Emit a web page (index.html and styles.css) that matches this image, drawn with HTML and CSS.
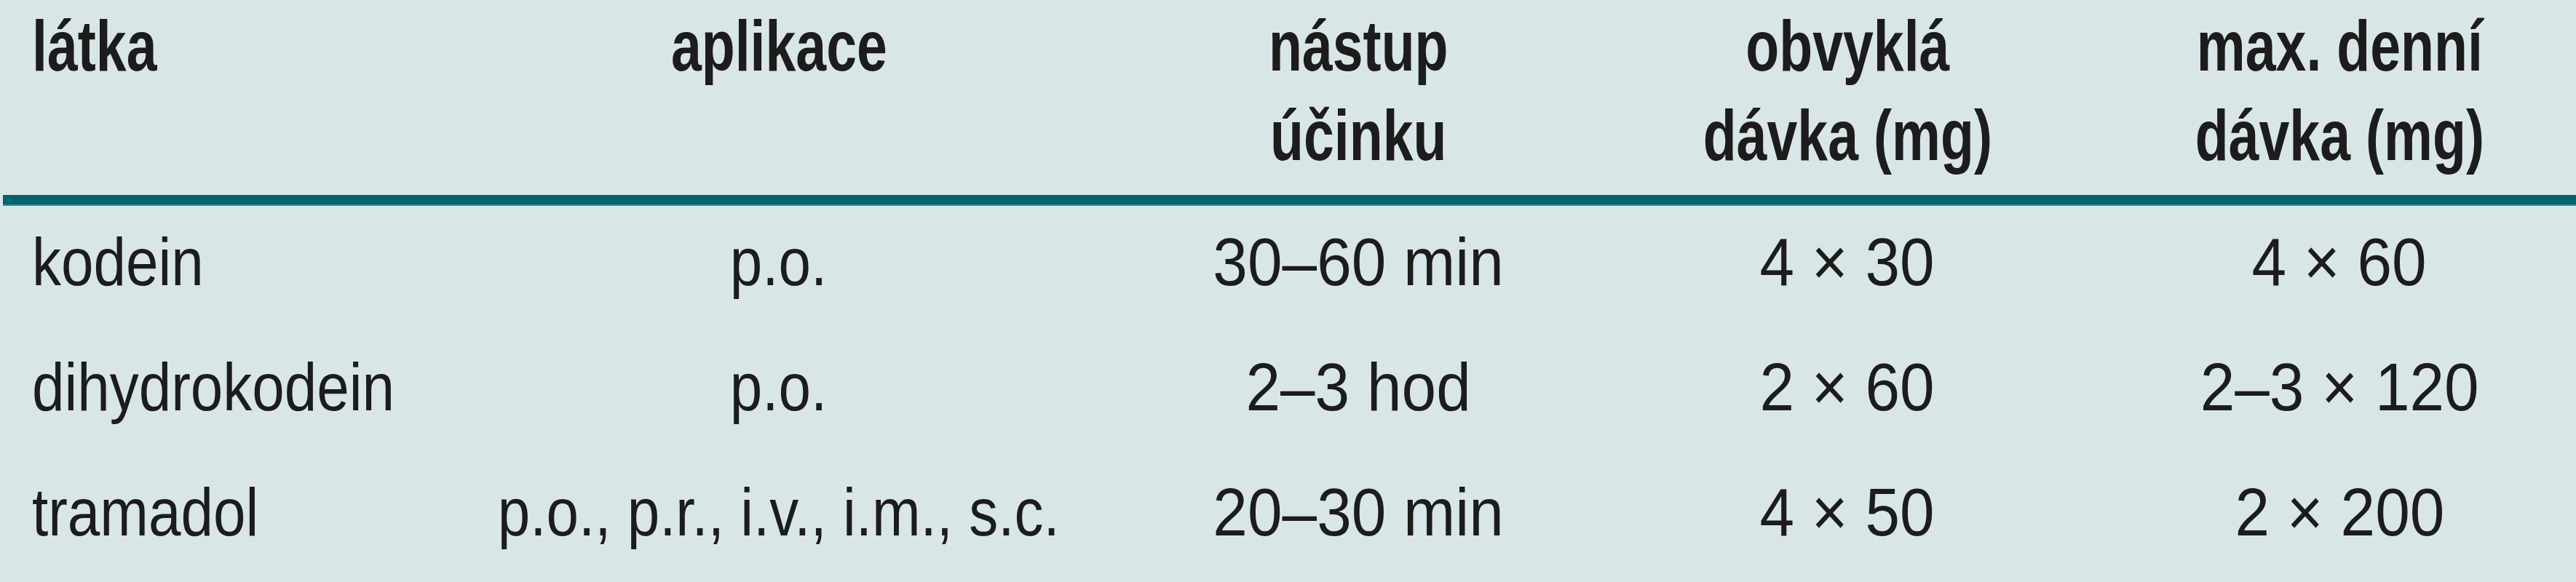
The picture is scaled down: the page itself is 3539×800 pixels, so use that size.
FILE: index.html
```html
<!DOCTYPE html>
<html lang="cs">
<head>
<meta charset="utf-8">
<title>Opioidy</title>
<link rel="stylesheet" href="styles.css">
</head>
<body>
<div class="table">
  <div class="row head">
    <div class="cell first"><span class="t">látka</span></div>
    <div class="cell"><span class="t">aplikace</span></div>
    <div class="cell"><span class="t">nástup<br>účinku</span></div>
    <div class="cell"><span class="t">obvyklá<br>dávka (mg)</span></div>
    <div class="cell"><span class="t">max. denní<br>dávka (mg)</span></div>
  </div>
  <div class="rule"></div>
  <div class="row body">
    <div class="cell first"><span class="t">kodein</span></div>
    <div class="cell"><span class="t">p.o.</span></div>
    <div class="cell"><span class="n">30–60 min</span></div>
    <div class="cell"><span class="n">4 × 30</span></div>
    <div class="cell"><span class="n">4 × 60</span></div>
  </div>
  <div class="row body">
    <div class="cell first"><span class="t">dihydrokodein</span></div>
    <div class="cell"><span class="t">p.o.</span></div>
    <div class="cell"><span class="n">2–3 hod</span></div>
    <div class="cell"><span class="n">2 × 60</span></div>
    <div class="cell"><span class="n">2–3 × 120</span></div>
  </div>
  <div class="row body">
    <div class="cell first"><span class="t">tramadol</span></div>
    <div class="cell"><span class="t">p.o., p.r., i.v., i.m., s.c.</span></div>
    <div class="cell"><span class="n">20–30 min</span></div>
    <div class="cell"><span class="n">4 × 50</span></div>
    <div class="cell"><span class="n">2 × 200</span></div>
  </div>
</div>
</body>
</html>
```
FILE: styles.css
```css
html, body {
  margin: 0;
  padding: 0;
  background: #d9e6e8;
}
body {
  width: 3539px;
  height: 800px;
  overflow: hidden;
  font-family: "Liberation Sans", Arial, sans-serif;
  color: #1c1c1c;
}
.row {
  display: grid;
  grid-template-columns: 595px 950px 642px 702px 650px;
}
.cell {
  text-align: center;
  white-space: nowrap;
}
.cell.first {
  text-align: left;
  padding-left: 44px;
}
.t, .n {
  display: inline-block;
  transform-origin: 50% 50%;
}
.first .t {
  transform-origin: 0 50%;
}
.body .t {
  transform: scaleX(0.86);
}
.body .n {
  transform: scaleX(0.92);
}
.head .t {
  transform: scaleX(0.76);
}
.head {
  font-weight: bold;
  font-size: 99px;
  line-height: 123px;
  padding-top: 1px;
  height: 268px;
  box-sizing: border-box;
}
.rule {
  margin-left: 4px;
  height: 15px;
  box-sizing: border-box;
  background: #00646e;
  border-bottom: 2px solid #3f8c92;
}
.body {
  font-size: 93px;
  line-height: 107px;
  padding-top: 24px;
  padding-bottom: 41px;
}
```
